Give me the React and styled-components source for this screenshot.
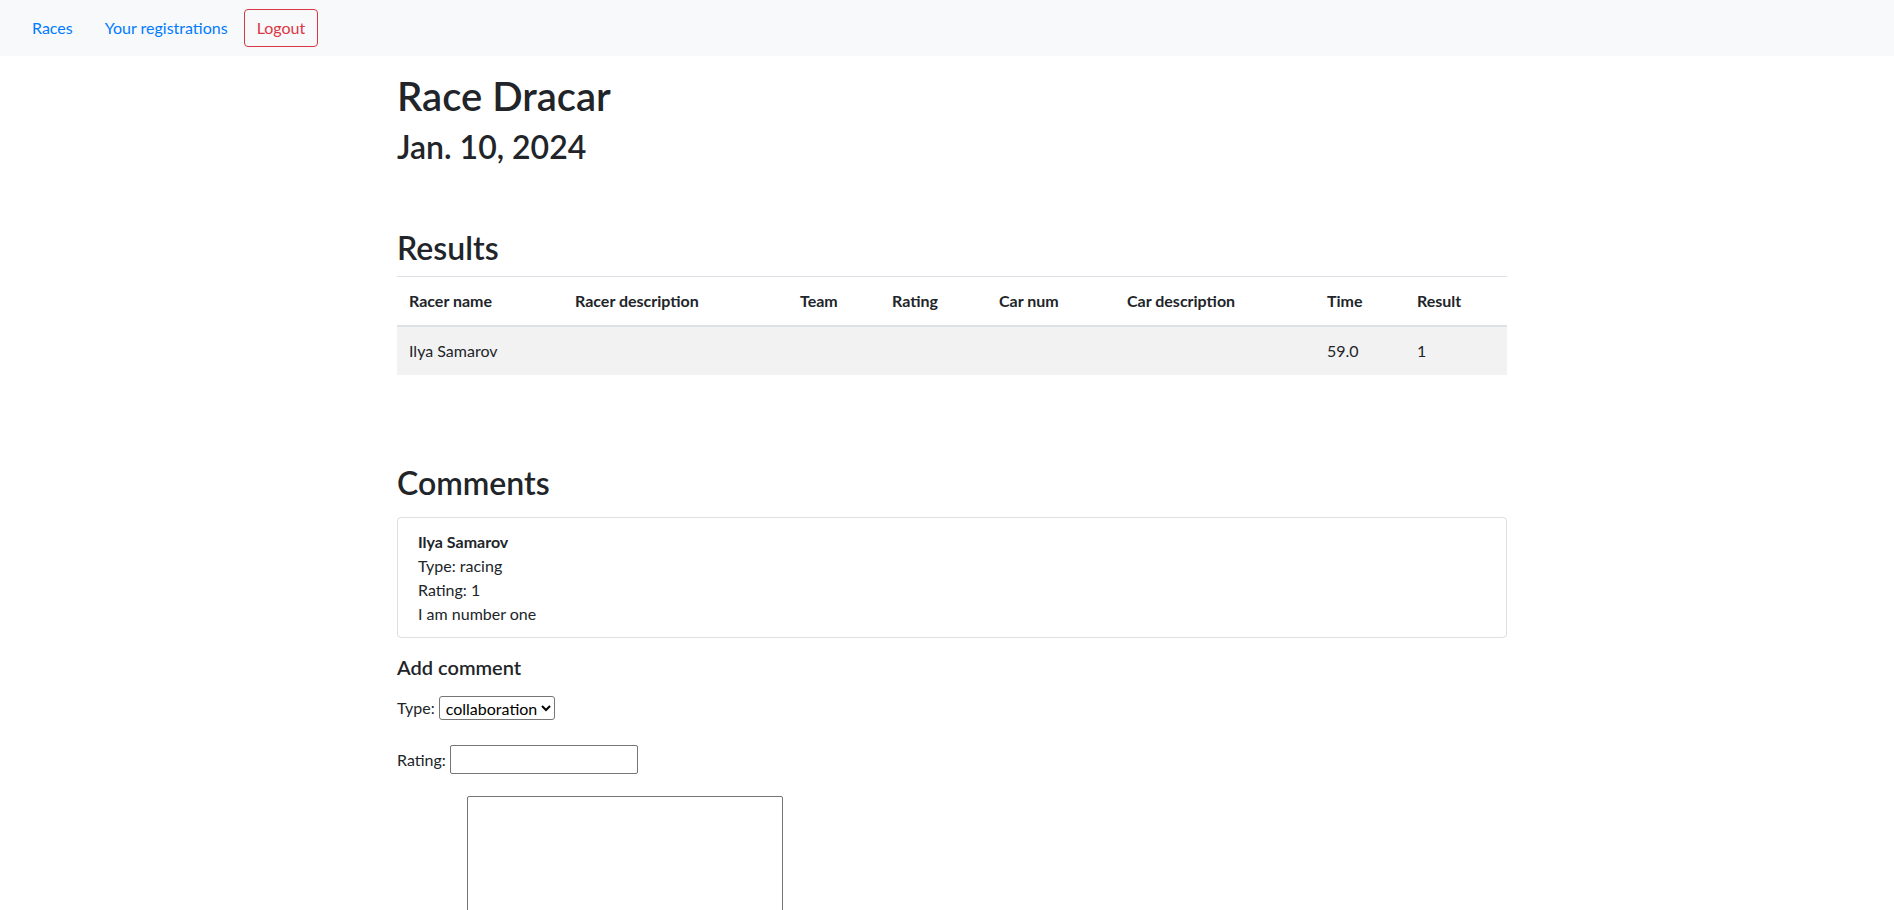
import React from 'react';
import styled, { createGlobalStyle } from 'styled-components';

const GlobalStyle = createGlobalStyle`
  * { box-sizing: border-box; }
  body {
    margin: 0;
    font-family: Lato, "Noto Sans", sans-serif;
    font-size: 16px;
    line-height: 1.5;
    color: #212529;
    background: #fff;
  }
`;

const Navbar = styled.nav`
  display: flex;
  align-items: center;
  height: 56px;
  padding: 8px 16px;
  background: #f8f9fa;
`;

const NavLink = styled.a`
  padding: 8px 16px;
  color: #007bff;
  text-decoration: none;
  line-height: 24px;
`;

const LogoutButton = styled.button`
  padding: 6px 12px;
  font: inherit;
  line-height: 24px;
  color: #dc3545;
  background: transparent;
  border: 1px solid #dc3545;
  border-radius: 4px;
  cursor: pointer;
`;

const Container = styled.main`
  width: 1110px;
  margin-left: calc(50% - 550px);
  padding-top: 16px;
`;

const Title = styled.h1`
  margin: 0 0 8px;
  font-size: 40px;
  font-weight: 600;
  line-height: 1.2;
`;

const Heading = styled.h2`
  margin: ${p => p.$top || 0}px 0 ${p => p.$bottom || 8}px;
  font-size: 32px;
  font-weight: 600;
  line-height: 1.2;
`;

const SubHeading = styled.h5`
  margin: ${p => p.$top || 0}px 0 0;
  font-size: 20px;
  font-weight: 600;
  line-height: 1.2;
`;

const Table = styled.table`
  width: 100%;
  border-collapse: collapse;
  table-layout: fixed;
  margin-bottom: 16px;
`;

const Th = styled.th`
  padding: 12px;
  text-align: left;
  font-weight: 700;
  vertical-align: bottom;
  border-top: 1px solid #dee2e6;
  border-bottom: 2px solid #dee2e6;
`;

const Row = styled.tr`
  background: ${p => (p.$odd ? 'rgba(0, 0, 0, 0.05)' : 'transparent')};
`;

const Td = styled.td`
  padding: 12px;
  border-top: 1px solid #dee2e6;
  vertical-align: top;
`;

const CommentCard = styled.div`
  border: 1px solid rgba(0, 0, 0, 0.125);
  border-radius: 4px;
  padding: 12px 20px 11px;
`;

const CommentLine = styled.div`
  font-weight: ${p => (p.$bold ? 700 : 400)};
`;

const FormRow = styled.div`
  display: flex;
  align-items: center;
  gap: 4px;
  margin-top: ${p => p.$top}px;
`;

const Select = styled.select`
  width: 116px;
  height: 24px;
  font: inherit;
  font-size: 16px;
  line-height: 20px;
  color: #000;
  background: #fff;
  border: 1px solid #767676;
  border-radius: 3px;
  padding: 0 0 0 2px;
`;

const TextInput = styled.input`
  width: 188px;
  height: 29px;
  font: inherit;
  border: 1px solid #767676;
  border-radius: 2px;
  padding: 1px 2px;
`;

const TextArea = styled.textarea`
  display: block;
  width: 316px;
  height: 200px;
  margin: 22px 0 0 70px;
  font: inherit;
  border: 1px solid #767676;
  border-radius: 2px;
  resize: both;
`;

const columns = [
  ['Racer name', 166],
  ['Racer description', 225],
  ['Team', 92],
  ['Rating', 107],
  ['Car num', 128],
  ['Car description', 200],
  ['Time', 90],
  ['Result', 102],
];

const results = [
  { name: 'Ilya Samarov', description: '', team: '', rating: '', carNum: '', carDescription: '', time: '59.0', result: '1' },
];

const comments = [
  { author: 'Ilya Samarov', type: 'racing', rating: 1, text: 'I am number one' },
];

export default function App() {
  return (
    <>
      <GlobalStyle />
      <Navbar>
        <NavLink href="#">Races</NavLink>
        <NavLink href="#">Your registrations</NavLink>
        <LogoutButton>Logout</LogoutButton>
      </Navbar>
      <Container>
        <Title>Race Dracar</Title>
        <Heading>Jan. 10, 2024</Heading>

        <Heading $top={63}>Results</Heading>
        <Table>
          <colgroup>
            {columns.map(([label, width]) => (
              <col key={label} style={{ width }} />
            ))}
          </colgroup>
          <thead>
            <tr>
              {columns.map(([label]) => (
                <Th key={label}>{label}</Th>
              ))}
            </tr>
          </thead>
          <tbody>
            {results.map((r, i) => (
              <Row key={r.name} $odd={i % 2 === 0}>
                <Td>{r.name}</Td>
                <Td>{r.description}</Td>
                <Td>{r.team}</Td>
                <Td>{r.rating}</Td>
                <Td>{r.carNum}</Td>
                <Td>{r.carDescription}</Td>
                <Td>{r.time}</Td>
                <Td>{r.result}</Td>
              </Row>
            ))}
          </tbody>
        </Table>

        <Heading $top={89} $bottom={15}>Comments</Heading>
        {comments.map(c => (
          <CommentCard key={c.author}>
            <CommentLine $bold>{c.author}</CommentLine>
            <CommentLine>Type: {c.type}</CommentLine>
            <CommentLine>Rating: {c.rating}</CommentLine>
            <CommentLine>{c.text}</CommentLine>
          </CommentCard>
        ))}

        <SubHeading $top={17}>Add comment</SubHeading>
        <form>
          <FormRow $top={17}>
            Type:
            <Select defaultValue="collaboration">
              <option value="collaboration">collaboration</option>
              <option value="racing">racing</option>
            </Select>
          </FormRow>
          <FormRow $top={25}>
            Rating:
            <TextInput type="text" />
          </FormRow>
          <TextArea />
        </form>
      </Container>
    </>
  );
}
